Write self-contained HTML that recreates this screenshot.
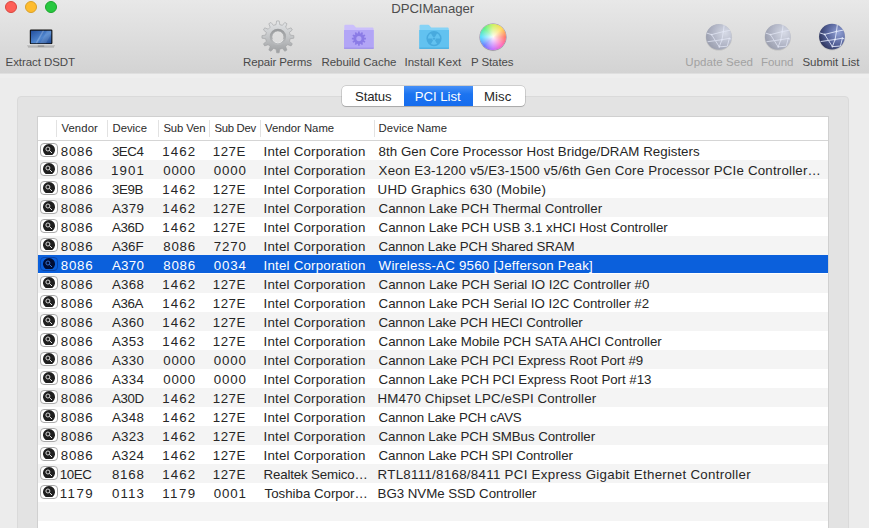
<!DOCTYPE html>
<html><head><meta charset="utf-8">
<style>
*{margin:0;padding:0;box-sizing:border-box}
html,body{width:869px;height:528px;overflow:hidden;background:#ececec;font-family:"Liberation Sans",sans-serif}
#tb{position:absolute;left:0;top:0;width:869px;height:74px;background:linear-gradient(#e8e8e8,#d3d3d3 73px,#dfdfdf 73px)}
#band{position:absolute;left:0;top:74px;width:869px;height:4px;background:#eeeeee}
.tl{position:absolute;top:1px;width:12px;height:12px;border-radius:50%}
#wheel{position:absolute;left:480.3px;top:24.1px;width:25.8px;height:25.8px;border-radius:50%;background:radial-gradient(circle at 50% 50%,rgba(255,255,255,0.95) 0,rgba(255,255,255,0.55) 30%,rgba(255,255,255,0) 75%),conic-gradient(from 0deg,#c8f050,#ffd84a 45deg,#ff6a5a 90deg,#ff5ab8 135deg,#c062ff 180deg,#5a6cff 225deg,#45dcff 270deg,#4cf07a 315deg,#c8f050 360deg);box-shadow:0 0 0 0.5px rgba(90,60,120,0.55),0 1px 1px rgba(0,0,0,.12)}
#title{position:absolute;top:0.5px;font-size:13.2px;color:#4d4d4d;line-height:16px;white-space:nowrap}
.lbl{position:absolute;top:55px;font-size:11.5px;color:#4a4a4a;line-height:14px;white-space:nowrap}
.lbl.dis{color:#a2a2a2}
#box{position:absolute;left:17px;top:96px;width:832px;height:450px;background:#e3e3e3;border:1px solid #dadada;border-radius:4px}
#seg{position:absolute;left:342px;top:86px;width:183px;height:20px;background:#fff;border-radius:4px;box-shadow:0 0 0 0.5px rgba(0,0,0,.25),0 1px 1px rgba(0,0,0,.15);overflow:hidden}
#seg .on{position:absolute;left:62px;top:0;width:69px;height:20px;background:linear-gradient(#4790f7,#1c74f0 40%,#166cee)}
#seg .s{position:absolute;top:1px;font-size:13.2px;line-height:19px;color:#262626;white-space:nowrap}
#tbl{position:absolute;left:37px;top:116px;width:792px;height:420px;background:#fff;border:1px solid #d0d0d0;overflow:hidden}
#hdr{position:absolute;left:0;top:0;width:790px;height:24px;border-bottom:1px solid #d5d5d5;background:#fff}
.h{position:absolute;top:4px;font-size:11.3px;color:#2b2b2b;line-height:14px;white-space:nowrap}
.sep{position:absolute;top:3px;width:1px;height:17px;background:#e2e2e2}
.row{position:absolute;left:0;width:790px;height:19px}
.row.alt{background:#f4f4f4}
.row.selr{background:linear-gradient(#0b60dc 18px,#fff 18px)}
.c{position:absolute;top:1px;font-size:13.3px;line-height:19px;color:#262626;white-space:nowrap}
.selr .c{color:#fff}
.ic{position:absolute;left:2px;top:2px}
</style></head><body>
<div id="tb">
  <svg id="tbsvg" width="869" height="74" viewBox="0 0 869 74" style="position:absolute;left:0;top:0"><defs><linearGradient id="scr" x1="0" y1="0" x2="1" y2="1"><stop offset="0" stop-color="#234f9e"/><stop offset="0.55" stop-color="#4f86cf"/><stop offset="1" stop-color="#1f4790"/></linearGradient>
<linearGradient id="base" x1="0" y1="0" x2="0" y2="1"><stop offset="0" stop-color="#e8e8e8"/><stop offset="1" stop-color="#a8a8a8"/></linearGradient></defs>
<rect x="29.8" y="29.6" width="22.6" height="14.6" rx="1.2" fill="#101010"/>
<rect x="30.9" y="30.7" width="20.4" height="12.6" fill="url(#scr)"/>
<path d="M35.5,43.3 L42.5,30.7 L44.2,30.7 L37.2,43.3Z" fill="rgba(255,255,255,0.22)"/>
<path d="M40,43.3 L47,30.7 L51.2,30.7 L51.2,34 L46,43.3Z" fill="rgba(255,255,255,0.10)"/>
<rect x="27" y="44.3" width="28" height="2" rx="0.5" fill="url(#base)"/>
<rect x="28" y="46.3" width="26" height="1.3" fill="#8a8a8a" opacity="0.55"/>
<rect x="37.8" y="45.3" width="6.4" height="1.6" fill="#7a7a7a" opacity="0.55"/>
<defs><linearGradient id="gearg" x1="0" y1="0" x2="0" y2="1"><stop offset="0" stop-color="#e4e6e8"/><stop offset="0.5" stop-color="#c4c6c8"/><stop offset="1" stop-color="#9c9ea0"/></linearGradient>
<linearGradient id="ringg" x1="0" y1="0" x2="0" y2="1"><stop offset="0" stop-color="#9a9c9e"/><stop offset="1" stop-color="#b8babc"/></linearGradient></defs>
<path d="M276.02,24.64 L276.64,20.95 L279.16,20.95 L279.78,24.64 L282.40,25.35 L284.79,22.46 L286.96,23.71 L285.65,27.22 L287.58,29.15 L291.09,27.84 L292.34,30.01 L289.45,32.40 L290.16,35.02 L293.85,35.64 L293.85,38.16 L290.16,38.78 L289.45,41.40 L292.34,43.79 L291.09,45.96 L287.58,44.65 L285.65,46.58 L286.96,50.09 L284.79,51.34 L282.40,48.45 L279.78,49.16 L279.16,52.85 L276.64,52.85 L276.02,49.16 L273.40,48.45 L271.01,51.34 L268.84,50.09 L270.15,46.58 L268.22,44.65 L264.71,45.96 L263.46,43.79 L266.35,41.40 L265.64,38.78 L261.95,38.16 L261.95,35.64 L265.64,35.02 L266.35,32.40 L263.46,30.01 L264.71,27.84 L268.22,29.15 L270.15,27.22 L268.84,23.71 L271.01,22.46 L273.40,25.35Z M271.90,36.90 a6.0,6.0 0 1,0 12.0,0 a6.0,6.0 0 1,0 -12.0,0Z" fill="url(#gearg)" fill-rule="evenodd" stroke="#9fa1a3" stroke-width="0.6"/>
<circle cx="277.9" cy="36.9" r="7.1" fill="none" stroke="url(#ringg)" stroke-width="2.2"/>
<path d="M272.5,39.5 A6,6 0 0,0 283.3,39.5" fill="none" stroke="#f4f4f4" stroke-width="0.8"/>
<path d="M344.3,26 Q344.3,24.8 345.5,24.8 L353.0,24.8 Q353.6,24.8 354.0,25.3 L356.0,27.6 L372.2,27.6 Q373.6,27.6 373.6,29 L373.6,48 L344.3,48Z" fill="#cbbffb"/>
<path d="M344.0,30.1 L373.8,30.1 L373.8,47.6 Q373.8,48.7 372.7,48.7 L345.1,48.7 Q344.0,48.7 344.0,47.6Z" fill="#b2a5f6"/>
<rect x="344.0" y="47.7" width="29.8" height="1" fill="#9a8be6"/>
<path d="M357.98,33.18 L358.12,31.54 L359.68,31.54 L359.82,33.18 L360.82,33.44 L361.75,32.10 L363.10,32.88 L362.41,34.36 L363.14,35.09 L364.62,34.40 L365.40,35.75 L364.06,36.68 L364.32,37.68 L365.96,37.82 L365.96,39.38 L364.32,39.52 L364.06,40.52 L365.40,41.45 L364.62,42.80 L363.14,42.11 L362.41,42.84 L363.10,44.32 L361.75,45.10 L360.82,43.76 L359.82,44.02 L359.68,45.66 L358.12,45.66 L357.98,44.02 L356.98,43.76 L356.05,45.10 L354.70,44.32 L355.39,42.84 L354.66,42.11 L353.18,42.80 L352.40,41.45 L353.74,40.52 L353.48,39.52 L351.84,39.38 L351.84,37.82 L353.48,37.68 L353.74,36.68 L352.40,35.75 L353.18,34.40 L354.66,35.09 L355.39,34.36 L354.70,32.88 L356.05,32.10 L356.98,33.44Z M356.30,38.60 a2.6,2.6 0 1,0 5.2,0 a2.6,2.6 0 1,0 -5.2,0Z" fill="#8b7be6" fill-rule="evenodd"/>
<path d="M419.5,26 Q419.5,24.8 420.7,24.8 L428.2,24.8 Q428.8,24.8 429.2,25.3 L431.2,27.6 L447.4,27.6 Q448.8,27.6 448.8,29 L448.8,48 L419.5,48Z" fill="#86d3f6"/>
<path d="M419.2,30.1 L449.0,30.1 L449.0,47.6 Q449.0,48.7 447.9,48.7 L420.3,48.7 Q419.2,48.7 419.2,47.6Z" fill="#62c2f0"/>
<rect x="419.2" y="47.7" width="29.8" height="1" fill="#3fa9df"/>
<circle cx="434" cy="38.6" r="6.9" fill="none" stroke="#48aade" stroke-width="1.4"/><path d="M433.05,36.95 L430.60,32.71 A6.8,6.8 0 0,1 437.40,32.71 L434.95,36.95 A1.9040000000000001,1.9040000000000001 0 0,0 433.05,36.95Z M435.90,38.60 L440.80,38.60 A6.8,6.8 0 0,1 437.40,44.49 L434.95,40.25 A1.9040000000000001,1.9040000000000001 0 0,0 435.90,38.60Z M433.05,40.25 L430.60,44.49 A6.8,6.8 0 0,1 427.20,38.60 L432.10,38.60 A1.9040000000000001,1.9040000000000001 0 0,0 433.05,40.25Z" fill="#48aade"/><circle cx="434" cy="38.6" r="1.2" fill="#48aade"/>
<defs><radialGradient id="g1" cx="0.75" cy="0.35" r="0.9"><stop offset="0" stop-color="#d6dae6"/><stop offset="0.5" stop-color="#b4b8c8"/><stop offset="1" stop-color="#9296a6"/></radialGradient><clipPath id="c1"><circle cx="718.9" cy="36.8" r="12.9"/></clipPath></defs>
<circle cx="718.9" cy="37.4" r="13.200000000000001" fill="rgba(0,0,0,0.10)"/>
<circle cx="718.9" cy="36.8" r="12.9" fill="url(#g1)"/>
<g clip-path="url(#c1)" stroke="#e4e8f6" stroke-width="1.0" opacity="0.75"><line x1="706.50" y1="33.03" x2="711.56" y2="34.62"/><line x1="711.56" y1="34.62" x2="723.37" y2="31.64"/><line x1="723.37" y1="31.64" x2="730.91" y2="30.15"/><line x1="711.56" y1="34.62" x2="719.30" y2="46.82"/><line x1="723.37" y1="31.64" x2="721.98" y2="39.68"/><line x1="721.98" y1="39.68" x2="719.30" y2="46.82"/><line x1="721.98" y1="39.68" x2="729.32" y2="38.39"/><line x1="729.32" y1="38.39" x2="731.60" y2="39.28"/><line x1="723.37" y1="31.64" x2="724.26" y2="24.59"/><line x1="719.30" y1="46.82" x2="727.33" y2="46.23"/><line x1="707.49" y1="41.76" x2="721.98" y2="39.68"/><line x1="729.32" y1="38.39" x2="727.33" y2="46.23"/></g><g fill="#e4e8f6" opacity="0.75"><circle cx="711.56" cy="34.62" r="0.9"/><circle cx="723.37" cy="31.64" r="0.9"/><circle cx="721.98" cy="39.68" r="0.9"/><circle cx="719.30" cy="46.82" r="0.9"/><circle cx="729.32" cy="38.39" r="0.9"/></g>
<defs><radialGradient id="g2" cx="0.75" cy="0.35" r="0.9"><stop offset="0" stop-color="#d6dae6"/><stop offset="0.5" stop-color="#b4b8c8"/><stop offset="1" stop-color="#9296a6"/></radialGradient><clipPath id="c2"><circle cx="777.8" cy="36.8" r="12.9"/></clipPath></defs>
<circle cx="777.8" cy="37.4" r="13.200000000000001" fill="rgba(0,0,0,0.10)"/>
<circle cx="777.8" cy="36.8" r="12.9" fill="url(#g2)"/>
<g clip-path="url(#c2)" stroke="#e4e8f6" stroke-width="1.0" opacity="0.75"><line x1="765.40" y1="33.03" x2="770.46" y2="34.62"/><line x1="770.46" y1="34.62" x2="782.27" y2="31.64"/><line x1="782.27" y1="31.64" x2="789.81" y2="30.15"/><line x1="770.46" y1="34.62" x2="778.20" y2="46.82"/><line x1="782.27" y1="31.64" x2="780.88" y2="39.68"/><line x1="780.88" y1="39.68" x2="778.20" y2="46.82"/><line x1="780.88" y1="39.68" x2="788.22" y2="38.39"/><line x1="788.22" y1="38.39" x2="790.50" y2="39.28"/><line x1="782.27" y1="31.64" x2="783.16" y2="24.59"/><line x1="778.20" y1="46.82" x2="786.23" y2="46.23"/><line x1="766.39" y1="41.76" x2="780.88" y2="39.68"/><line x1="788.22" y1="38.39" x2="786.23" y2="46.23"/></g><g fill="#e4e8f6" opacity="0.75"><circle cx="770.46" cy="34.62" r="0.9"/><circle cx="782.27" cy="31.64" r="0.9"/><circle cx="780.88" cy="39.68" r="0.9"/><circle cx="778.20" cy="46.82" r="0.9"/><circle cx="788.22" cy="38.39" r="0.9"/></g>
<defs><radialGradient id="g3" cx="0.75" cy="0.35" r="0.9"><stop offset="0" stop-color="#93a2d6"/><stop offset="0.5" stop-color="#56639a"/><stop offset="1" stop-color="#22274a"/></radialGradient><clipPath id="c3"><circle cx="832.0" cy="36.6" r="12.9"/></clipPath></defs>
<circle cx="832.0" cy="37.2" r="13.200000000000001" fill="rgba(0,0,0,0.10)"/>
<circle cx="832.0" cy="36.6" r="12.9" fill="url(#g3)"/>
<g clip-path="url(#c3)" stroke="#e8eeff" stroke-width="1.0" opacity="0.85"><line x1="819.60" y1="32.83" x2="824.66" y2="34.42"/><line x1="824.66" y1="34.42" x2="836.47" y2="31.44"/><line x1="836.47" y1="31.44" x2="844.01" y2="29.95"/><line x1="824.66" y1="34.42" x2="832.40" y2="46.62"/><line x1="836.47" y1="31.44" x2="835.08" y2="39.48"/><line x1="835.08" y1="39.48" x2="832.40" y2="46.62"/><line x1="835.08" y1="39.48" x2="842.42" y2="38.19"/><line x1="842.42" y1="38.19" x2="844.70" y2="39.08"/><line x1="836.47" y1="31.44" x2="837.36" y2="24.39"/><line x1="832.40" y1="46.62" x2="840.43" y2="46.03"/><line x1="820.59" y1="41.56" x2="835.08" y2="39.48"/><line x1="842.42" y1="38.19" x2="840.43" y2="46.03"/></g><g fill="#e8eeff" opacity="0.85"><circle cx="824.66" cy="34.42" r="0.9"/><circle cx="836.47" cy="31.44" r="0.9"/><circle cx="835.08" cy="39.48" r="0.9"/><circle cx="832.40" cy="46.62" r="0.9"/><circle cx="842.42" cy="38.19" r="0.9"/></g></svg>
  <div id="wheel"></div>
  <div class="tl" style="left:5px;background:#fe5f57;border:0.8px solid #d8463e"></div>
  <div class="tl" style="left:25px;background:#febc2e;border:0.8px solid #d9a028"></div>
  <div class="tl" style="left:45px;background:#28c840;border:0.8px solid #1ca52c"></div>
  <div id="title" style="left:391.20px;letter-spacing:-0.066px">DPCIManager</div>
  <div class="lbl" style="left:5.60px;letter-spacing:-0.078px">Extract DSDT</div><div class="lbl" style="left:243.10px;letter-spacing:-0.132px">Repair Perms</div><div class="lbl" style="left:321.50px;letter-spacing:-0.045px">Rebuild Cache</div><div class="lbl" style="left:404.40px;letter-spacing:0.050px">Install Kext</div><div class="lbl" style="left:471.00px;letter-spacing:-0.103px">P States</div><div class="lbl dis" style="left:685.30px;letter-spacing:0.056px">Update Seed</div><div class="lbl dis" style="left:761.00px;letter-spacing:-0.053px">Found</div><div class="lbl" style="left:802.40px;letter-spacing:0.021px">Submit List</div>
</div>
<div id="band"></div>
<div id="box"></div>
<div id="seg">
  <div class="on"></div>
  <div class="s" style="left:13.00px;letter-spacing:-0.158px">Status</div>
  <div class="s" style="left:72.70px;letter-spacing:-0.029px;color:#fff">PCI List</div>
  <div class="s" style="left:142.00px;letter-spacing:0.097px">Misc</div>
</div>
<div id="tbl">
  <div id="hdr"><div class="sep" style="left:18px"></div><div class="sep" style="left:69px"></div><div class="sep" style="left:120px"></div><div class="sep" style="left:171px"></div><div class="sep" style="left:222px"></div><div class="sep" style="left:336px"></div><div class="h" style="left:23.40px;letter-spacing:0.131px">Vendor</div><div class="h" style="left:74.50px;letter-spacing:0.000px">Device</div><div class="h" style="left:125.40px;letter-spacing:-0.106px">Sub Ven</div><div class="h" style="left:176.60px;letter-spacing:-0.313px">Sub Dev</div><div class="h" style="left:227.00px;letter-spacing:0.000px">Vendor Name</div><div class="h" style="left:340.60px;letter-spacing:0.068px">Device Name</div></div>
  <div class="row" style="top:24px"><svg class="ic" width="18" height="14" viewBox="0 0 18 14"><rect x="0.5" y="0.5" width="17" height="13" rx="3.5" fill="#ffffff" stroke="#a9a9a9"/><path d="M5.68,12 A6,6 0 1,1 12.32,12Z" fill="#1f1f1f"/><circle cx="7.9" cy="6" r="2" fill="none" stroke="#e6e6e6" stroke-width="0.9"/><line x1="9.4" y1="7.5" x2="12" y2="10" stroke="#e6e6e6" stroke-width="1"/></svg><span class="c" style="left:22.70px;letter-spacing:0.805px">8086</span><span class="c" style="left:73.90px;letter-spacing:-0.422px">3EC4</span><span class="c" style="left:124.20px;letter-spacing:1.138px">1462</span><span class="c" style="left:174.80px;letter-spacing:0.472px">127E</span><span class="c" style="left:225.60px;letter-spacing:0.212px">Intel Corporation</span><span class="c" style="left:340.60px;letter-spacing:0.038px">8th Gen Core Processor Host Bridge/DRAM Registers</span></div><div class="row alt" style="top:43px"><svg class="ic" width="18" height="14" viewBox="0 0 18 14"><rect x="0.5" y="0.5" width="17" height="13" rx="3.5" fill="#ffffff" stroke="#a9a9a9"/><path d="M5.68,12 A6,6 0 1,1 12.32,12Z" fill="#1f1f1f"/><circle cx="7.9" cy="6" r="2" fill="none" stroke="#e6e6e6" stroke-width="0.9"/><line x1="9.4" y1="7.5" x2="12" y2="10" stroke="#e6e6e6" stroke-width="1"/></svg><span class="c" style="left:22.70px;letter-spacing:0.805px">8086</span><span class="c" style="left:72.90px;letter-spacing:1.138px">1901</span><span class="c" style="left:125.20px;letter-spacing:0.805px">0000</span><span class="c" style="left:175.80px;letter-spacing:0.805px">0000</span><span class="c" style="left:225.60px;letter-spacing:0.212px">Intel Corporation</span><span class="c" style="left:340.60px;letter-spacing:0.198px">Xeon E3-1200 v5/E3-1500 v5/6th Gen Core Processor PCIe Controller…</span></div><div class="row" style="top:62px"><svg class="ic" width="18" height="14" viewBox="0 0 18 14"><rect x="0.5" y="0.5" width="17" height="13" rx="3.5" fill="#ffffff" stroke="#a9a9a9"/><path d="M5.68,12 A6,6 0 1,1 12.32,12Z" fill="#1f1f1f"/><circle cx="7.9" cy="6" r="2" fill="none" stroke="#e6e6e6" stroke-width="0.9"/><line x1="9.4" y1="7.5" x2="12" y2="10" stroke="#e6e6e6" stroke-width="1"/></svg><span class="c" style="left:22.70px;letter-spacing:0.805px">8086</span><span class="c" style="left:73.90px;letter-spacing:-0.353px">3E9B</span><span class="c" style="left:124.20px;letter-spacing:1.138px">1462</span><span class="c" style="left:174.80px;letter-spacing:0.472px">127E</span><span class="c" style="left:225.60px;letter-spacing:0.212px">Intel Corporation</span><span class="c" style="left:339.60px;letter-spacing:0.205px">UHD Graphics 630 (Mobile)</span></div><div class="row alt" style="top:81px"><svg class="ic" width="18" height="14" viewBox="0 0 18 14"><rect x="0.5" y="0.5" width="17" height="13" rx="3.5" fill="#ffffff" stroke="#a9a9a9"/><path d="M5.68,12 A6,6 0 1,1 12.32,12Z" fill="#1f1f1f"/><circle cx="7.9" cy="6" r="2" fill="none" stroke="#e6e6e6" stroke-width="0.9"/><line x1="9.4" y1="7.5" x2="12" y2="10" stroke="#e6e6e6" stroke-width="1"/></svg><span class="c" style="left:22.70px;letter-spacing:0.805px">8086</span><span class="c" style="left:73.90px;letter-spacing:0.314px">A379</span><span class="c" style="left:124.20px;letter-spacing:1.138px">1462</span><span class="c" style="left:174.80px;letter-spacing:0.472px">127E</span><span class="c" style="left:225.60px;letter-spacing:0.212px">Intel Corporation</span><span class="c" style="left:340.60px;letter-spacing:-0.029px">Cannon Lake PCH Thermal Controller</span></div><div class="row" style="top:100px"><svg class="ic" width="18" height="14" viewBox="0 0 18 14"><rect x="0.5" y="0.5" width="17" height="13" rx="3.5" fill="#ffffff" stroke="#a9a9a9"/><path d="M5.68,12 A6,6 0 1,1 12.32,12Z" fill="#1f1f1f"/><circle cx="7.9" cy="6" r="2" fill="none" stroke="#e6e6e6" stroke-width="0.9"/><line x1="9.4" y1="7.5" x2="12" y2="10" stroke="#e6e6e6" stroke-width="1"/></svg><span class="c" style="left:22.70px;letter-spacing:0.805px">8086</span><span class="c" style="left:73.90px;letter-spacing:-0.353px">A36D</span><span class="c" style="left:124.20px;letter-spacing:1.138px">1462</span><span class="c" style="left:174.80px;letter-spacing:0.472px">127E</span><span class="c" style="left:225.60px;letter-spacing:0.212px">Intel Corporation</span><span class="c" style="left:340.60px;letter-spacing:-0.013px">Cannon Lake PCH USB 3.1 xHCI Host Controller</span></div><div class="row alt" style="top:119px"><svg class="ic" width="18" height="14" viewBox="0 0 18 14"><rect x="0.5" y="0.5" width="17" height="13" rx="3.5" fill="#ffffff" stroke="#a9a9a9"/><path d="M5.68,12 A6,6 0 1,1 12.32,12Z" fill="#1f1f1f"/><circle cx="7.9" cy="6" r="2" fill="none" stroke="#e6e6e6" stroke-width="0.9"/><line x1="9.4" y1="7.5" x2="12" y2="10" stroke="#e6e6e6" stroke-width="1"/></svg><span class="c" style="left:22.70px;letter-spacing:0.805px">8086</span><span class="c" style="left:73.90px;letter-spacing:-0.020px">A36F</span><span class="c" style="left:125.20px;letter-spacing:0.805px">8086</span><span class="c" style="left:175.80px;letter-spacing:0.805px">7270</span><span class="c" style="left:225.60px;letter-spacing:0.212px">Intel Corporation</span><span class="c" style="left:340.60px;letter-spacing:-0.142px">Cannon Lake PCH Shared SRAM</span></div><div class="row selr" style="top:138px"><svg class="ic" width="18" height="14" viewBox="0 0 18 14"><rect x="0.5" y="0.5" width="17" height="13" rx="3.5" fill="#0b60dc" stroke="#0a45a8"/><path d="M5.68,12 A6,6 0 1,1 12.32,12Z" fill="#000c33"/><circle cx="7.9" cy="6" r="2" fill="none" stroke="#3a78d8" stroke-width="0.9"/><line x1="9.4" y1="7.5" x2="12" y2="10" stroke="#3a78d8" stroke-width="1"/></svg><span class="c" style="left:22.70px;letter-spacing:0.805px">8086</span><span class="c" style="left:73.90px;letter-spacing:0.314px">A370</span><span class="c" style="left:125.20px;letter-spacing:0.805px">8086</span><span class="c" style="left:175.80px;letter-spacing:0.805px">0034</span><span class="c" style="left:225.60px;letter-spacing:0.212px">Intel Corporation</span><span class="c" style="left:340.60px;letter-spacing:0.235px">Wireless-AC 9560 [Jefferson Peak]</span></div><div class="row alt" style="top:157px"><svg class="ic" width="18" height="14" viewBox="0 0 18 14"><rect x="0.5" y="0.5" width="17" height="13" rx="3.5" fill="#ffffff" stroke="#a9a9a9"/><path d="M5.68,12 A6,6 0 1,1 12.32,12Z" fill="#1f1f1f"/><circle cx="7.9" cy="6" r="2" fill="none" stroke="#e6e6e6" stroke-width="0.9"/><line x1="9.4" y1="7.5" x2="12" y2="10" stroke="#e6e6e6" stroke-width="1"/></svg><span class="c" style="left:22.70px;letter-spacing:0.805px">8086</span><span class="c" style="left:73.90px;letter-spacing:0.314px">A368</span><span class="c" style="left:124.20px;letter-spacing:1.138px">1462</span><span class="c" style="left:174.80px;letter-spacing:0.472px">127E</span><span class="c" style="left:225.60px;letter-spacing:0.212px">Intel Corporation</span><span class="c" style="left:340.60px;letter-spacing:0.007px">Cannon Lake PCH Serial IO I2C Controller #0</span></div><div class="row" style="top:176px"><svg class="ic" width="18" height="14" viewBox="0 0 18 14"><rect x="0.5" y="0.5" width="17" height="13" rx="3.5" fill="#ffffff" stroke="#a9a9a9"/><path d="M5.68,12 A6,6 0 1,1 12.32,12Z" fill="#1f1f1f"/><circle cx="7.9" cy="6" r="2" fill="none" stroke="#e6e6e6" stroke-width="0.9"/><line x1="9.4" y1="7.5" x2="12" y2="10" stroke="#e6e6e6" stroke-width="1"/></svg><span class="c" style="left:22.70px;letter-spacing:0.805px">8086</span><span class="c" style="left:73.90px;letter-spacing:-0.353px">A36A</span><span class="c" style="left:124.20px;letter-spacing:1.138px">1462</span><span class="c" style="left:174.80px;letter-spacing:0.472px">127E</span><span class="c" style="left:225.60px;letter-spacing:0.212px">Intel Corporation</span><span class="c" style="left:340.60px;letter-spacing:-0.000px">Cannon Lake PCH Serial IO I2C Controller #2</span></div><div class="row alt" style="top:195px"><svg class="ic" width="18" height="14" viewBox="0 0 18 14"><rect x="0.5" y="0.5" width="17" height="13" rx="3.5" fill="#ffffff" stroke="#a9a9a9"/><path d="M5.68,12 A6,6 0 1,1 12.32,12Z" fill="#1f1f1f"/><circle cx="7.9" cy="6" r="2" fill="none" stroke="#e6e6e6" stroke-width="0.9"/><line x1="9.4" y1="7.5" x2="12" y2="10" stroke="#e6e6e6" stroke-width="1"/></svg><span class="c" style="left:22.70px;letter-spacing:0.805px">8086</span><span class="c" style="left:73.90px;letter-spacing:0.314px">A360</span><span class="c" style="left:124.20px;letter-spacing:1.138px">1462</span><span class="c" style="left:174.80px;letter-spacing:0.472px">127E</span><span class="c" style="left:225.60px;letter-spacing:0.212px">Intel Corporation</span><span class="c" style="left:340.60px;letter-spacing:-0.118px">Cannon Lake PCH HECI Controller</span></div><div class="row" style="top:214px"><svg class="ic" width="18" height="14" viewBox="0 0 18 14"><rect x="0.5" y="0.5" width="17" height="13" rx="3.5" fill="#ffffff" stroke="#a9a9a9"/><path d="M5.68,12 A6,6 0 1,1 12.32,12Z" fill="#1f1f1f"/><circle cx="7.9" cy="6" r="2" fill="none" stroke="#e6e6e6" stroke-width="0.9"/><line x1="9.4" y1="7.5" x2="12" y2="10" stroke="#e6e6e6" stroke-width="1"/></svg><span class="c" style="left:22.70px;letter-spacing:0.805px">8086</span><span class="c" style="left:73.90px;letter-spacing:0.314px">A353</span><span class="c" style="left:124.20px;letter-spacing:1.138px">1462</span><span class="c" style="left:174.80px;letter-spacing:0.472px">127E</span><span class="c" style="left:225.60px;letter-spacing:0.212px">Intel Corporation</span><span class="c" style="left:340.60px;letter-spacing:-0.056px">Cannon Lake Mobile PCH SATA AHCI Controller</span></div><div class="row alt" style="top:233px"><svg class="ic" width="18" height="14" viewBox="0 0 18 14"><rect x="0.5" y="0.5" width="17" height="13" rx="3.5" fill="#ffffff" stroke="#a9a9a9"/><path d="M5.68,12 A6,6 0 1,1 12.32,12Z" fill="#1f1f1f"/><circle cx="7.9" cy="6" r="2" fill="none" stroke="#e6e6e6" stroke-width="0.9"/><line x1="9.4" y1="7.5" x2="12" y2="10" stroke="#e6e6e6" stroke-width="1"/></svg><span class="c" style="left:22.70px;letter-spacing:0.805px">8086</span><span class="c" style="left:73.90px;letter-spacing:0.314px">A330</span><span class="c" style="left:125.20px;letter-spacing:0.805px">0000</span><span class="c" style="left:175.80px;letter-spacing:0.805px">0000</span><span class="c" style="left:225.60px;letter-spacing:0.212px">Intel Corporation</span><span class="c" style="left:340.60px;letter-spacing:-0.057px">Cannon Lake PCH PCI Express Root Port #9</span></div><div class="row" style="top:252px"><svg class="ic" width="18" height="14" viewBox="0 0 18 14"><rect x="0.5" y="0.5" width="17" height="13" rx="3.5" fill="#ffffff" stroke="#a9a9a9"/><path d="M5.68,12 A6,6 0 1,1 12.32,12Z" fill="#1f1f1f"/><circle cx="7.9" cy="6" r="2" fill="none" stroke="#e6e6e6" stroke-width="0.9"/><line x1="9.4" y1="7.5" x2="12" y2="10" stroke="#e6e6e6" stroke-width="1"/></svg><span class="c" style="left:22.70px;letter-spacing:0.805px">8086</span><span class="c" style="left:73.90px;letter-spacing:0.314px">A334</span><span class="c" style="left:125.20px;letter-spacing:0.805px">0000</span><span class="c" style="left:175.80px;letter-spacing:0.805px">0000</span><span class="c" style="left:225.60px;letter-spacing:0.212px">Intel Corporation</span><span class="c" style="left:340.60px;letter-spacing:-0.035px">Cannon Lake PCH PCI Express Root Port #13</span></div><div class="row alt" style="top:271px"><svg class="ic" width="18" height="14" viewBox="0 0 18 14"><rect x="0.5" y="0.5" width="17" height="13" rx="3.5" fill="#ffffff" stroke="#a9a9a9"/><path d="M5.68,12 A6,6 0 1,1 12.32,12Z" fill="#1f1f1f"/><circle cx="7.9" cy="6" r="2" fill="none" stroke="#e6e6e6" stroke-width="0.9"/><line x1="9.4" y1="7.5" x2="12" y2="10" stroke="#e6e6e6" stroke-width="1"/></svg><span class="c" style="left:22.70px;letter-spacing:0.805px">8086</span><span class="c" style="left:73.90px;letter-spacing:-0.353px">A30D</span><span class="c" style="left:124.20px;letter-spacing:1.138px">1462</span><span class="c" style="left:174.80px;letter-spacing:0.472px">127E</span><span class="c" style="left:225.60px;letter-spacing:0.212px">Intel Corporation</span><span class="c" style="left:339.60px;letter-spacing:0.108px">HM470 Chipset LPC/eSPI Controller</span></div><div class="row" style="top:290px"><svg class="ic" width="18" height="14" viewBox="0 0 18 14"><rect x="0.5" y="0.5" width="17" height="13" rx="3.5" fill="#ffffff" stroke="#a9a9a9"/><path d="M5.68,12 A6,6 0 1,1 12.32,12Z" fill="#1f1f1f"/><circle cx="7.9" cy="6" r="2" fill="none" stroke="#e6e6e6" stroke-width="0.9"/><line x1="9.4" y1="7.5" x2="12" y2="10" stroke="#e6e6e6" stroke-width="1"/></svg><span class="c" style="left:22.70px;letter-spacing:0.805px">8086</span><span class="c" style="left:73.90px;letter-spacing:0.314px">A348</span><span class="c" style="left:124.20px;letter-spacing:1.138px">1462</span><span class="c" style="left:174.80px;letter-spacing:0.472px">127E</span><span class="c" style="left:225.60px;letter-spacing:0.212px">Intel Corporation</span><span class="c" style="left:340.60px;letter-spacing:-0.198px">Cannon Lake PCH cAVS</span></div><div class="row alt" style="top:309px"><svg class="ic" width="18" height="14" viewBox="0 0 18 14"><rect x="0.5" y="0.5" width="17" height="13" rx="3.5" fill="#ffffff" stroke="#a9a9a9"/><path d="M5.68,12 A6,6 0 1,1 12.32,12Z" fill="#1f1f1f"/><circle cx="7.9" cy="6" r="2" fill="none" stroke="#e6e6e6" stroke-width="0.9"/><line x1="9.4" y1="7.5" x2="12" y2="10" stroke="#e6e6e6" stroke-width="1"/></svg><span class="c" style="left:22.70px;letter-spacing:0.805px">8086</span><span class="c" style="left:73.90px;letter-spacing:0.314px">A323</span><span class="c" style="left:124.20px;letter-spacing:1.138px">1462</span><span class="c" style="left:174.80px;letter-spacing:0.472px">127E</span><span class="c" style="left:225.60px;letter-spacing:0.212px">Intel Corporation</span><span class="c" style="left:340.60px;letter-spacing:-0.072px">Cannon Lake PCH SMBus Controller</span></div><div class="row" style="top:328px"><svg class="ic" width="18" height="14" viewBox="0 0 18 14"><rect x="0.5" y="0.5" width="17" height="13" rx="3.5" fill="#ffffff" stroke="#a9a9a9"/><path d="M5.68,12 A6,6 0 1,1 12.32,12Z" fill="#1f1f1f"/><circle cx="7.9" cy="6" r="2" fill="none" stroke="#e6e6e6" stroke-width="0.9"/><line x1="9.4" y1="7.5" x2="12" y2="10" stroke="#e6e6e6" stroke-width="1"/></svg><span class="c" style="left:22.70px;letter-spacing:0.805px">8086</span><span class="c" style="left:73.90px;letter-spacing:0.314px">A324</span><span class="c" style="left:124.20px;letter-spacing:1.138px">1462</span><span class="c" style="left:174.80px;letter-spacing:0.472px">127E</span><span class="c" style="left:225.60px;letter-spacing:0.212px">Intel Corporation</span><span class="c" style="left:340.60px;letter-spacing:-0.104px">Cannon Lake PCH SPI Controller</span></div><div class="row alt" style="top:347px"><svg class="ic" width="18" height="14" viewBox="0 0 18 14"><rect x="0.5" y="0.5" width="17" height="13" rx="3.5" fill="#ffffff" stroke="#a9a9a9"/><path d="M5.68,12 A6,6 0 1,1 12.32,12Z" fill="#1f1f1f"/><circle cx="7.9" cy="6" r="2" fill="none" stroke="#e6e6e6" stroke-width="0.9"/><line x1="9.4" y1="7.5" x2="12" y2="10" stroke="#e6e6e6" stroke-width="1"/></svg><span class="c" style="left:21.70px;letter-spacing:-0.353px">10EC</span><span class="c" style="left:73.90px;letter-spacing:0.805px">8168</span><span class="c" style="left:124.20px;letter-spacing:1.138px">1462</span><span class="c" style="left:174.80px;letter-spacing:0.472px">127E</span><span class="c" style="left:225.60px;letter-spacing:-0.158px">Realtek Semico…</span><span class="c" style="left:339.60px;letter-spacing:0.292px">RTL8111/8168/8411 PCI Express Gigabit Ethernet Controller</span></div><div class="row" style="top:366px"><svg class="ic" width="18" height="14" viewBox="0 0 18 14"><rect x="0.5" y="0.5" width="17" height="13" rx="3.5" fill="#ffffff" stroke="#a9a9a9"/><path d="M5.68,12 A6,6 0 1,1 12.32,12Z" fill="#1f1f1f"/><circle cx="7.9" cy="6" r="2" fill="none" stroke="#e6e6e6" stroke-width="0.9"/><line x1="9.4" y1="7.5" x2="12" y2="10" stroke="#e6e6e6" stroke-width="1"/></svg><span class="c" style="left:21.70px;letter-spacing:1.467px">1179</span><span class="c" style="left:73.90px;letter-spacing:1.134px">0113</span><span class="c" style="left:124.20px;letter-spacing:1.467px">1179</span><span class="c" style="left:175.80px;letter-spacing:0.805px">0001</span><span class="c" style="left:226.60px;letter-spacing:-0.019px">Toshiba Corpor…</span><span class="c" style="left:339.60px;letter-spacing:-0.036px">BG3 NVMe SSD Controller</span></div><div class="row alt" style="top:385px"></div><div class="row" style="top:404px"></div>
</div>
</body></html>
